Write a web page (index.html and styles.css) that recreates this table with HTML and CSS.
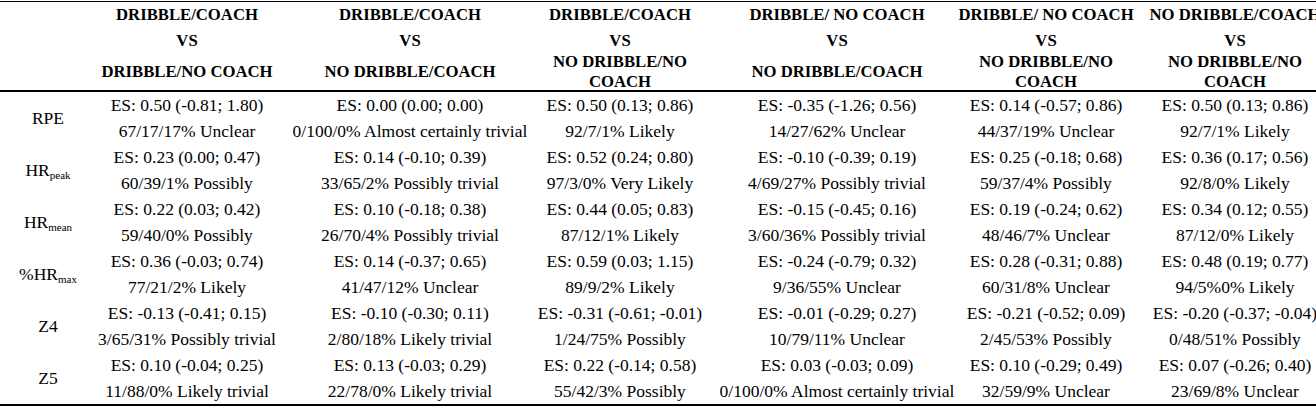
FILE: index.html
```html
<!DOCTYPE html>
<html>
<head>
<meta charset="utf-8">
<link rel="stylesheet" href="styles.css">
</head>
<body>
<table class="tbl">
  <colgroup>
    <col class="c0"><col class="c1"><col class="c2"><col class="c3"><col class="c4"><col class="c5"><col class="c6">
  </colgroup>
  <thead>
    <tr>
      <th></th>
      <th><div class="h1"><span>DRIBBLE/COACH</span></div><div class="h2"><span>VS</span></div><div class="h3"><span>DRIBBLE/NO COACH</span></div></th>
      <th><div class="h1"><span>DRIBBLE/COACH</span></div><div class="h2"><span>VS</span></div><div class="h3"><span>NO DRIBBLE/COACH</span></div></th>
      <th><div class="h1"><span>DRIBBLE/COACH</span></div><div class="h2"><span>VS</span></div><div class="h3"><span>NO DRIBBLE/NO<br>COACH</span></div></th>
      <th><div class="h1"><span>DRIBBLE/ NO COACH</span></div><div class="h2"><span>VS</span></div><div class="h3"><span>NO DRIBBLE/COACH</span></div></th>
      <th><div class="h1"><span>DRIBBLE/ NO COACH</span></div><div class="h2"><span>VS</span></div><div class="h3"><span>NO DRIBBLE/NO<br>COACH</span></div></th>
      <th><div class="h1"><span>NO DRIBBLE/COACH</span></div><div class="h2"><span>VS</span></div><div class="h3"><span>NO DRIBBLE/NO<br>COACH</span></div></th>
    </tr>
  </thead>
  <tbody>
    <tr>
      <td class="lbl">RPE</td>
      <td><div class="ln"><span>ES: 0.50 (-0.81; 1.80)</span></div><div class="ln"><span>67/17/17% Unclear</span></div></td>
      <td><div class="ln"><span>ES: 0.00 (0.00; 0.00)</span></div><div class="ln"><span>0/100/0% Almost certainly trivial</span></div></td>
      <td><div class="ln"><span>ES: 0.50 (0.13; 0.86)</span></div><div class="ln"><span>92/7/1% Likely</span></div></td>
      <td><div class="ln"><span>ES: -0.35 (-1.26; 0.56)</span></div><div class="ln"><span>14/27/62% Unclear</span></div></td>
      <td><div class="ln"><span>ES: 0.14 (-0.57; 0.86)</span></div><div class="ln"><span>44/37/19% Unclear</span></div></td>
      <td><div class="ln"><span>ES: 0.50 (0.13; 0.86)</span></div><div class="ln"><span>92/7/1% Likely</span></div></td>
    </tr>
    <tr>
      <td class="lbl">HR<sub>peak</sub></td>
      <td><div class="ln"><span>ES: 0.23 (0.00; 0.47)</span></div><div class="ln"><span>60/39/1% Possibly</span></div></td>
      <td><div class="ln"><span>ES: 0.14 (-0.10; 0.39)</span></div><div class="ln"><span>33/65/2% Possibly trivial</span></div></td>
      <td><div class="ln"><span>ES: 0.52 (0.24; 0.80)</span></div><div class="ln"><span>97/3/0% Very Likely</span></div></td>
      <td><div class="ln"><span>ES: -0.10 (-0.39; 0.19)</span></div><div class="ln"><span>4/69/27% Possibly trivial</span></div></td>
      <td><div class="ln"><span>ES: 0.25 (-0.18; 0.68)</span></div><div class="ln"><span>59/37/4% Possibly</span></div></td>
      <td><div class="ln"><span>ES: 0.36 (0.17; 0.56)</span></div><div class="ln"><span>92/8/0% Likely</span></div></td>
    </tr>
    <tr>
      <td class="lbl">HR<sub>mean</sub></td>
      <td><div class="ln"><span>ES: 0.22 (0.03; 0.42)</span></div><div class="ln"><span>59/40/0% Possibly</span></div></td>
      <td><div class="ln"><span>ES: 0.10 (-0.18; 0.38)</span></div><div class="ln"><span>26/70/4% Possibly trivial</span></div></td>
      <td><div class="ln"><span>ES: 0.44 (0.05; 0.83)</span></div><div class="ln"><span>87/12/1% Likely</span></div></td>
      <td><div class="ln"><span>ES: -0.15 (-0.45; 0.16)</span></div><div class="ln"><span>3/60/36% Possibly trivial</span></div></td>
      <td><div class="ln"><span>ES: 0.19 (-0.24; 0.62)</span></div><div class="ln"><span>48/46/7% Unclear</span></div></td>
      <td><div class="ln"><span>ES: 0.34 (0.12; 0.55)</span></div><div class="ln"><span>87/12/0% Likely</span></div></td>
    </tr>
    <tr>
      <td class="lbl">%HR<sub>max</sub></td>
      <td><div class="ln"><span>ES: 0.36 (-0.03; 0.74)</span></div><div class="ln"><span>77/21/2% Likely</span></div></td>
      <td><div class="ln"><span>ES: 0.14 (-0.37; 0.65)</span></div><div class="ln"><span>41/47/12% Unclear</span></div></td>
      <td><div class="ln"><span>ES: 0.59 (0.03; 1.15)</span></div><div class="ln"><span>89/9/2% Likely</span></div></td>
      <td><div class="ln"><span>ES: -0.24 (-0.79; 0.32)</span></div><div class="ln"><span>9/36/55% Unclear</span></div></td>
      <td><div class="ln"><span>ES: 0.28 (-0.31; 0.88)</span></div><div class="ln"><span>60/31/8% Unclear</span></div></td>
      <td><div class="ln"><span>ES: 0.48 (0.19; 0.77)</span></div><div class="ln"><span>94/5%0% Likely</span></div></td>
    </tr>
    <tr>
      <td class="lbl">Z4</td>
      <td><div class="ln"><span>ES: -0.13 (-0.41; 0.15)</span></div><div class="ln"><span>3/65/31% Possibly trivial</span></div></td>
      <td><div class="ln"><span>ES: -0.10 (-0.30; 0.11)</span></div><div class="ln"><span>2/80/18% Likely trivial</span></div></td>
      <td><div class="ln"><span>ES: -0.31 (-0.61; -0.01)</span></div><div class="ln"><span>1/24/75% Possibly</span></div></td>
      <td><div class="ln"><span>ES: -0.01 (-0.29; 0.27)</span></div><div class="ln"><span>10/79/11% Unclear</span></div></td>
      <td><div class="ln"><span>ES: -0.21 (-0.52; 0.09)</span></div><div class="ln"><span>2/45/53% Possibly</span></div></td>
      <td><div class="ln"><span>ES: -0.20 (-0.37; -0.04)</span></div><div class="ln"><span>0/48/51% Possibly</span></div></td>
    </tr>
    <tr class="last">
      <td class="lbl">Z5</td>
      <td><div class="ln"><span>ES: 0.10 (-0.04; 0.25)</span></div><div class="ln"><span>11/88/0% Likely trivial</span></div></td>
      <td><div class="ln"><span>ES: 0.13 (-0.03; 0.29)</span></div><div class="ln"><span>22/78/0% Likely trivial</span></div></td>
      <td><div class="ln"><span>ES: 0.22 (-0.14; 0.58)</span></div><div class="ln"><span>55/42/3% Possibly</span></div></td>
      <td><div class="ln"><span>ES: 0.03 (-0.03; 0.09)</span></div><div class="ln"><span>0/100/0% Almost certainly trivial</span></div></td>
      <td><div class="ln"><span>ES: 0.10 (-0.29; 0.49)</span></div><div class="ln"><span>32/59/9% Unclear</span></div></td>
      <td><div class="ln"><span>ES: 0.07 (-0.26; 0.40)</span></div><div class="ln"><span>23/69/8% Unclear</span></div></td>
    </tr>
  </tbody>
</table>
</body>
</html>
```
FILE: styles.css
```css
html, body {
  margin: 0;
  padding: 0;
  background: #fff;
  overflow: hidden;
}
body {
  font-family: "Liberation Serif", "Times New Roman", serif;
  color: #000;
}
.tbl {
  margin-top: 1px;
  width: 1354px;
  table-layout: fixed;
  border-collapse: collapse;
  border-top: 1px solid #000;
}
.c0 { width: 96px; }
.c1 { width: 182px; }
.c2 { width: 264px; }
.c3 { width: 156px; }
.c4 { width: 278px; }
.c5 { width: 140px; }
.c6 { width: 238px; }
th {
  padding: 0;
  font-weight: bold;
  font-size: 16.7px;
  text-align: center;
  white-space: nowrap;
  border-bottom: 2px solid #000;
  vertical-align: top;
}
.h1, .h2 {
  height: 26px;
  line-height: 26px;
  display: flex;
  justify-content: center;
}
.h3 {
  height: 36px;
  display: flex;
  align-items: center;
  justify-content: center;
  line-height: 20px;
}
.h1 span, .h2 span, .h3 span, .ln span {
  flex: none;
}
td {
  padding: 0;
  font-size: 17.5px;
  text-align: center;
  white-space: nowrap;
  vertical-align: middle;
}
.ln {
  height: 26px;
  line-height: 26px;
  display: flex;
  justify-content: center;
}
.lbl {
  font-size: 17.5px;
}
.lbl sub {
  font-size: 11px;
  vertical-align: -3px;
  line-height: 0;
}
.last td {
  border-bottom: 2px solid #000;
}
```
